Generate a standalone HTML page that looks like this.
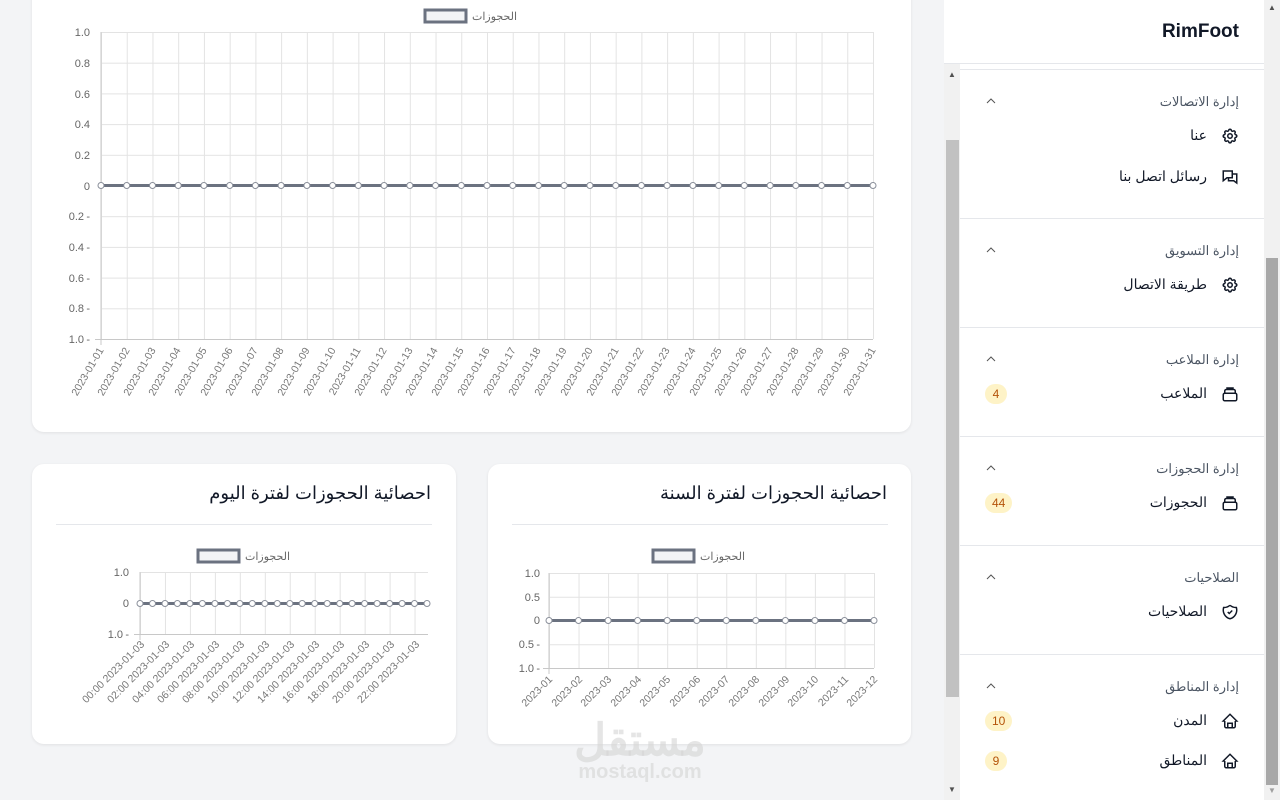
<!DOCTYPE html>
<html><head><meta charset="utf-8"><style>
*{margin:0;padding:0;box-sizing:border-box}
body{width:1280px;height:800px;overflow:hidden;background:#f3f4f6;font-family:"Liberation Sans","Noto Sans CJK SC",sans-serif;position:relative}
.card{position:absolute;background:#fff;border-radius:12px;box-shadow:0 1px 3px rgba(0,0,0,.08)}
svg text{font-family:"Liberation Sans","Noto Sans CJK SC",sans-serif}
.ttl{position:absolute;font-size:18px;color:#111827;direction:rtl}
.hr{position:absolute;height:1px;background:#e5e7eb}
#side{position:absolute;left:944px;top:0;width:336px;height:800px;background:#fff}
.sec{position:absolute;left:16px;width:304px;border-top:1px solid #e5e7eb}
.h{position:absolute;right:41px;font-size:13px;color:#4b5563;direction:rtl}
.car{position:absolute;left:42px;width:10px;height:6px}
.it{position:absolute;right:73px;font-size:14px;color:#111827;direction:rtl}
.ic{position:absolute;right:41px;width:18px;height:18px}
.bd{position:absolute;left:41px;height:20px;border-radius:10px;background:#fef3c7;color:#b45309;font-size:12px;line-height:20px;text-align:center;padding:0 7px;min-width:22px}
</style></head><body>

<div class="card" style="left:32px;top:-20px;width:879px;height:452px"></div>
<svg style="position:absolute;left:0;top:0" width="944" height="800">
<defs>
<pattern id="gb" x="101" y="32" width="25.733" height="30.7" patternUnits="userSpaceOnUse"><path d="M0.5 0V30.7M0 0.5H25.733" stroke="#e3e3e3" fill="none"/></pattern>
<pattern id="gy" x="549" y="573" width="29.545" height="23.75" patternUnits="userSpaceOnUse"><path d="M0.5 0V23.75M0 0.5H29.545" stroke="#e3e3e3" fill="none"/></pattern>
<pattern id="gd" x="140" y="572" width="24.96" height="31" patternUnits="userSpaceOnUse"><path d="M0.5 0V31M0 0.5H24.96" stroke="#e3e3e3" fill="none"/></pattern>
<marker id="m" markerWidth="8" markerHeight="8" refX="4" refY="4" markerUnits="userSpaceOnUse"><circle cx="4" cy="4" r="3" fill="#fff" stroke="#8a8f9a" stroke-width="1"/></marker>
</defs>
<rect x="425" y="10" width="41" height="12" fill="#f3f4f6" stroke="#6b7280" stroke-width="3"/>
<text x="517" y="20" font-size="11" fill="#666" text-anchor="end">الحجوزات</text>
<rect x="101" y="32" width="772" height="307" fill="url(#gb)"/>
<line x1="873.5" y1="32" x2="873.5" y2="339" stroke="#e3e3e3"/>
<line x1="101" y1="32" x2="101" y2="345" stroke="#c8c8c8"/>
<line x1="95" y1="339.5" x2="873" y2="339.5" stroke="#c8c8c8"/>
<g font-size="11" fill="#666" text-anchor="end">
<text x="90" y="36">1.0</text><text x="90" y="67">0.8</text><text x="90" y="98">0.6</text><text x="90" y="128">0.4</text><text x="90" y="159">0.2</text><text x="90" y="190">0</text>
<text x="84" y="220">0.2</text><text x="84" y="251">0.4</text><text x="84" y="282">0.6</text><text x="84" y="312">0.8</text><text x="84" y="343">1.0</text>
<text x="90" y="220">-</text><text x="90" y="251">-</text><text x="90" y="282">-</text><text x="90" y="312">-</text><text x="90" y="343">-</text>
</g>
<polyline points="101,185.5 126.7,185.5 152.5,185.5 178.2,185.5 203.9,185.5 229.7,185.5 255.4,185.5 281.1,185.5 306.9,185.5 332.6,185.5 358.3,185.5 384.1,185.5 409.8,185.5 435.5,185.5 461.3,185.5 487,185.5 512.7,185.5 538.5,185.5 564.2,185.5 589.9,185.5 615.7,185.5 641.4,185.5 667.1,185.5 692.9,185.5 718.6,185.5 744.3,185.5 770.1,185.5 795.8,185.5 821.5,185.5 847.3,185.5 873,185.5" fill="none" stroke="#6b7280" stroke-width="3" marker-start="url(#m)" marker-mid="url(#m)" marker-end="url(#m)"/>
<g font-size="10.5" fill="#777" text-anchor="end">
<text transform="translate(104,350) rotate(-60)">2023-01-01</text><text transform="translate(130,350) rotate(-60)">2023-01-02</text><text transform="translate(156,350) rotate(-60)">2023-01-03</text><text transform="translate(181,350) rotate(-60)">2023-01-04</text><text transform="translate(207,350) rotate(-60)">2023-01-05</text><text transform="translate(233,350) rotate(-60)">2023-01-06</text><text transform="translate(258,350) rotate(-60)">2023-01-07</text><text transform="translate(284,350) rotate(-60)">2023-01-08</text><text transform="translate(310,350) rotate(-60)">2023-01-09</text><text transform="translate(336,350) rotate(-60)">2023-01-10</text><text transform="translate(361,350) rotate(-60)">2023-01-11</text><text transform="translate(387,350) rotate(-60)">2023-01-12</text><text transform="translate(413,350) rotate(-60)">2023-01-13</text><text transform="translate(438,350) rotate(-60)">2023-01-14</text><text transform="translate(464,350) rotate(-60)">2023-01-15</text><text transform="translate(490,350) rotate(-60)">2023-01-16</text><text transform="translate(516,350) rotate(-60)">2023-01-17</text><text transform="translate(541,350) rotate(-60)">2023-01-18</text><text transform="translate(567,350) rotate(-60)">2023-01-19</text><text transform="translate(593,350) rotate(-60)">2023-01-20</text><text transform="translate(619,350) rotate(-60)">2023-01-21</text><text transform="translate(644,350) rotate(-60)">2023-01-22</text><text transform="translate(670,350) rotate(-60)">2023-01-23</text><text transform="translate(696,350) rotate(-60)">2023-01-24</text><text transform="translate(722,350) rotate(-60)">2023-01-25</text><text transform="translate(747,350) rotate(-60)">2023-01-26</text><text transform="translate(773,350) rotate(-60)">2023-01-27</text><text transform="translate(799,350) rotate(-60)">2023-01-28</text><text transform="translate(824,350) rotate(-60)">2023-01-29</text><text transform="translate(850,350) rotate(-60)">2023-01-30</text><text transform="translate(876,350) rotate(-60)">2023-01-31</text>
</g>
</svg>

<div class="card" style="left:32px;top:464px;width:424px;height:280px"></div>
<div class="card" style="left:488px;top:464px;width:423px;height:280px"></div>
<div class="ttl" style="right:849px;top:483px">احصائية الحجوزات لفترة اليوم</div>
<div class="ttl" style="right:393px;top:483px">احصائية الحجوزات لفترة السنة</div>
<div class="hr" style="left:56px;width:376px;top:524px"></div>
<div class="hr" style="left:512px;width:376px;top:524px"></div>

<svg style="position:absolute;left:0;top:0" width="944" height="800">
<rect x="653" y="550" width="41" height="12" fill="#f3f4f6" stroke="#6b7280" stroke-width="3"/>
<text x="745" y="560" font-size="11" fill="#666" text-anchor="end">الحجوزات</text>
<rect x="549" y="573" width="325" height="95" fill="url(#gy)"/>
<line x1="874.5" y1="573" x2="874.5" y2="668" stroke="#e3e3e3"/>
<line x1="549" y1="573" x2="549" y2="674" stroke="#c8c8c8"/>
<line x1="543" y1="668.5" x2="874" y2="668.5" stroke="#c8c8c8"/>
<g font-size="11" fill="#666" text-anchor="end">
<text x="540" y="577">1.0</text><text x="540" y="601">0.5</text><text x="540" y="624">0</text><text x="534" y="648">0.5</text><text x="534" y="672">1.0</text><text x="540" y="648">-</text><text x="540" y="672">-</text>
</g>
<polyline points="549,620.5 578.5,620.5 608.1,620.5 637.6,620.5 667.2,620.5 696.7,620.5 726.3,620.5 755.8,620.5 785.4,620.5 814.9,620.5 844.5,620.5 874,620.5" fill="none" stroke="#6b7280" stroke-width="3" marker-start="url(#m)" marker-mid="url(#m)" marker-end="url(#m)"/>
<g font-size="10.5" fill="#777" text-anchor="end">
<text transform="translate(553,680) rotate(-45)">2023-01</text><text transform="translate(583,680) rotate(-45)">2023-02</text><text transform="translate(612,680) rotate(-45)">2023-03</text><text transform="translate(642,680) rotate(-45)">2023-04</text><text transform="translate(671,680) rotate(-45)">2023-05</text><text transform="translate(701,680) rotate(-45)">2023-06</text><text transform="translate(730,680) rotate(-45)">2023-07</text><text transform="translate(760,680) rotate(-45)">2023-08</text><text transform="translate(790,680) rotate(-45)">2023-09</text><text transform="translate(819,680) rotate(-45)">2023-10</text><text transform="translate(849,680) rotate(-45)">2023-11</text><text transform="translate(878,680) rotate(-45)">2023-12</text>
</g>
<rect x="198" y="550" width="41" height="12" fill="#f3f4f6" stroke="#6b7280" stroke-width="3"/>
<text x="290" y="560" font-size="11" fill="#666" text-anchor="end">الحجوزات</text>
<rect x="140" y="572" width="288" height="62" fill="url(#gd)"/>
<line x1="140" y1="572" x2="140" y2="640" stroke="#c8c8c8"/>
<line x1="134" y1="634.5" x2="428" y2="634.5" stroke="#c8c8c8"/>
<g font-size="11" fill="#666" text-anchor="end">
<text x="129" y="576">1.0</text><text x="129" y="607">0</text><text x="123" y="638">1.0</text><text x="129" y="638">-</text>
</g>
<polyline points="140,603.5 152.5,603.5 165,603.5 177.4,603.5 189.9,603.5 202.4,603.5 214.9,603.5 227.4,603.5 239.8,603.5 252.3,603.5 264.8,603.5 277.3,603.5 289.8,603.5 302.2,603.5 314.7,603.5 327.2,603.5 339.7,603.5 352.1,603.5 364.6,603.5 377.1,603.5 389.6,603.5 402.1,603.5 414.5,603.5 427,603.5" fill="none" stroke="#6b7280" stroke-width="3" marker-start="url(#m)" marker-mid="url(#m)" marker-end="url(#m)"/>
<g font-size="10.5" fill="#777" text-anchor="end">
<text transform="translate(145,645) rotate(-45)">00:00 2023-01-03</text><text transform="translate(170,645) rotate(-45)">02:00 2023-01-03</text><text transform="translate(195,645) rotate(-45)">04:00 2023-01-03</text><text transform="translate(220,645) rotate(-45)">06:00 2023-01-03</text><text transform="translate(245,645) rotate(-45)">08:00 2023-01-03</text><text transform="translate(270,645) rotate(-45)">10:00 2023-01-03</text><text transform="translate(295,645) rotate(-45)">12:00 2023-01-03</text><text transform="translate(320,645) rotate(-45)">14:00 2023-01-03</text><text transform="translate(345,645) rotate(-45)">16:00 2023-01-03</text><text transform="translate(370,645) rotate(-45)">18:00 2023-01-03</text><text transform="translate(395,645) rotate(-45)">20:00 2023-01-03</text><text transform="translate(420,645) rotate(-45)">22:00 2023-01-03</text>
</g>
<text x="640" y="755" font-size="44" font-weight="bold" fill="#d4d4d4" fill-opacity=".6" text-anchor="middle">مستقل</text>
<text x="640" y="778" font-size="20" font-weight="bold" fill="#d4d4d4" fill-opacity=".6" text-anchor="middle">mostaql.com</text>
</svg>

<div id="side">
<div style="position:absolute;right:41px;top:21px;font-size:19px;font-weight:bold;color:#111827">RimFoot</div>
<div style="position:absolute;left:0;top:63px;width:320px;height:1px;background:#e5e7eb"></div>
<div style="position:absolute;left:0;top:69px;width:320px;height:1px;background:#e5e7eb"></div>
<div style="position:absolute;left:0;top:64px;width:16px;height:736px;background:#f1f1f1"></div>
<div style="position:absolute;left:2px;top:140px;width:13px;height:557px;background:#c1c1c1"></div>
<div style="position:absolute;left:4px;top:70px;font-size:8px;color:#505050">▲</div>
<div style="position:absolute;left:4px;top:785px;font-size:8px;color:#505050">▼</div>
<div style="position:absolute;left:320px;top:0;width:16px;height:800px;background:#f1f1f1"></div>
<div style="position:absolute;left:322px;top:258px;width:12px;height:527px;background:#a8a8a8"></div>
<div style="position:absolute;left:324px;top:3px;font-size:8px;color:#505050">▲</div>
<div style="position:absolute;left:324px;top:786px;font-size:8px;color:#a0a0a0">▼</div>

<div class="h" style="top:94px">إدارة الاتصالات</div><svg class="car" style="top:98px" viewBox="0 0 10 6"><path d="M1 5L5 1L9 5" fill="none" stroke="#555" stroke-width="1"/></svg>
<div class="it" style="top:127px">عنا</div>
<svg class="ic" style="top:127px" viewBox="0 0 24 24" fill="none" stroke="#111827" stroke-width="2"><path d="M10.3 4.3c.4-1.8 3-1.8 3.4 0a1.7 1.7 0 0 0 2.6 1.1c1.5-.9 3.300.8 2.4 2.4a1.7 1.7 0 0 0 1 2.5c1.8.5 1.8 3 0 3.5a1.7 1.7 0 0 0-1 2.6c.9 1.5-.9 3.3-2.4 2.4a1.7 1.7 0 0 0-2.6 1c-.4 1.8-3 1.8-3.4 0a1.7 1.7 0 0 0-2.6-1c-1.5.9-3.3-.9-2.4-2.4a1.7 1.7 0 0 0-1-2.6c-1.8-.4-1.8-3 0-3.5a1.7 1.7 0 0 0 1-2.5c-.9-1.6.9-3.3 2.4-2.4a1.7 1.7 0 0 0 2.6-1.1z"/><circle cx="12" cy="12" r="3"/></svg>
<div class="it" style="top:168px">رسائل اتصل بنا</div>
<svg class="ic" style="top:168px" viewBox="0 0 24 24" fill="none" stroke="#111827" stroke-width="2"><path d="M3 4h12v9H8l-5 4z"/><path d="M15 8h6v12l-4-3h-7v-4"/></svg>

<div class="sec" style="top:218px"></div>
<div class="h" style="top:243px">إدارة التسويق</div><svg class="car" style="top:247px" viewBox="0 0 10 6"><path d="M1 5L5 1L9 5" fill="none" stroke="#555" stroke-width="1"/></svg>
<div class="it" style="top:276px">طريقة الاتصال</div>
<svg class="ic" style="top:276px" viewBox="0 0 24 24" fill="none" stroke="#111827" stroke-width="2"><path d="M10.3 4.3c.4-1.8 3-1.8 3.4 0a1.7 1.7 0 0 0 2.6 1.1c1.5-.9 3.3.8 2.4 2.4a1.7 1.7 0 0 0 1 2.5c1.8.5 1.8 3 0 3.5a1.7 1.7 0 0 0-1 2.6c.9 1.5-.9 3.3-2.4 2.4a1.7 1.7 0 0 0-2.6 1c-.4 1.8-3 1.8-3.4 0a1.7 1.7 0 0 0-2.6-1c-1.5.9-3.3-.9-2.4-2.4a1.7 1.7 0 0 0-1-2.6c-1.8-.4-1.8-3 0-3.5a1.7 1.7 0 0 0 1-2.5c-.9-1.6.9-3.3 2.4-2.4a1.7 1.7 0 0 0 2.6-1.1z"/><circle cx="12" cy="12" r="3"/></svg>

<div class="sec" style="top:327px"></div>
<div class="h" style="top:352px">إدارة الملاعب</div><svg class="car" style="top:356px" viewBox="0 0 10 6"><path d="M1 5L5 1L9 5" fill="none" stroke="#555" stroke-width="1"/></svg>
<div class="it" style="top:385px">الملاعب</div><div class="bd" style="top:384px">4</div>
<svg class="ic" style="top:385px" viewBox="0 0 24 24" fill="none" stroke="#111827" stroke-width="2"><rect x="3" y="11" width="18" height="10" rx="2"/><path d="M5 11V8a2 2 0 0 1 2-2h10a2 2 0 0 1 2 2v3M8 6V4h8v2"/></svg>

<div class="sec" style="top:436px"></div>
<div class="h" style="top:461px">إدارة الحجوزات</div><svg class="car" style="top:465px" viewBox="0 0 10 6"><path d="M1 5L5 1L9 5" fill="none" stroke="#555" stroke-width="1"/></svg>
<div class="it" style="top:494px">الحجوزات</div><div class="bd" style="top:493px">44</div>
<svg class="ic" style="top:494px" viewBox="0 0 24 24" fill="none" stroke="#111827" stroke-width="2"><rect x="3" y="11" width="18" height="10" rx="2"/><path d="M5 11V8a2 2 0 0 1 2-2h10a2 2 0 0 1 2 2v3M8 6V4h8v2"/></svg>

<div class="sec" style="top:545px"></div>
<div class="h" style="top:570px">الصلاحيات</div><svg class="car" style="top:574px" viewBox="0 0 10 6"><path d="M1 5L5 1L9 5" fill="none" stroke="#555" stroke-width="1"/></svg>
<div class="it" style="top:603px">الصلاحيات</div>
<svg class="ic" style="top:603px" viewBox="0 0 24 24" fill="none" stroke="#111827" stroke-width="2"><path d="M12 3a12 12 0 0 0 8.5 3A12 12 0 0 1 12 21 12 12 0 0 1 3.5 6 12 12 0 0 0 12 3"/><path d="M9 12l2 2 4-4"/></svg>

<div class="sec" style="top:654px"></div>
<div class="h" style="top:679px">إدارة المناطق</div><svg class="car" style="top:683px" viewBox="0 0 10 6"><path d="M1 5L5 1L9 5" fill="none" stroke="#555" stroke-width="1"/></svg>
<div class="it" style="top:712px">المدن</div><div class="bd" style="top:711px">10</div>
<svg class="ic" style="top:712px" viewBox="0 0 24 24" fill="none" stroke="#111827" stroke-width="2"><path d="M5 12H3l9-9 9 9h-2M5 12v7a2 2 0 0 0 2 2h10a2 2 0 0 0 2-2v-7"/><path d="M9 21v-6h6v6"/></svg>
<div class="it" style="top:752px">المناطق</div><div class="bd" style="top:751px">9</div>
<svg class="ic" style="top:752px" viewBox="0 0 24 24" fill="none" stroke="#111827" stroke-width="2"><path d="M5 12H3l9-9 9 9h-2M5 12v7a2 2 0 0 0 2 2h10a2 2 0 0 0 2-2v-7"/><path d="M9 21v-6h6v6"/></svg>
</div>
</body></html>
